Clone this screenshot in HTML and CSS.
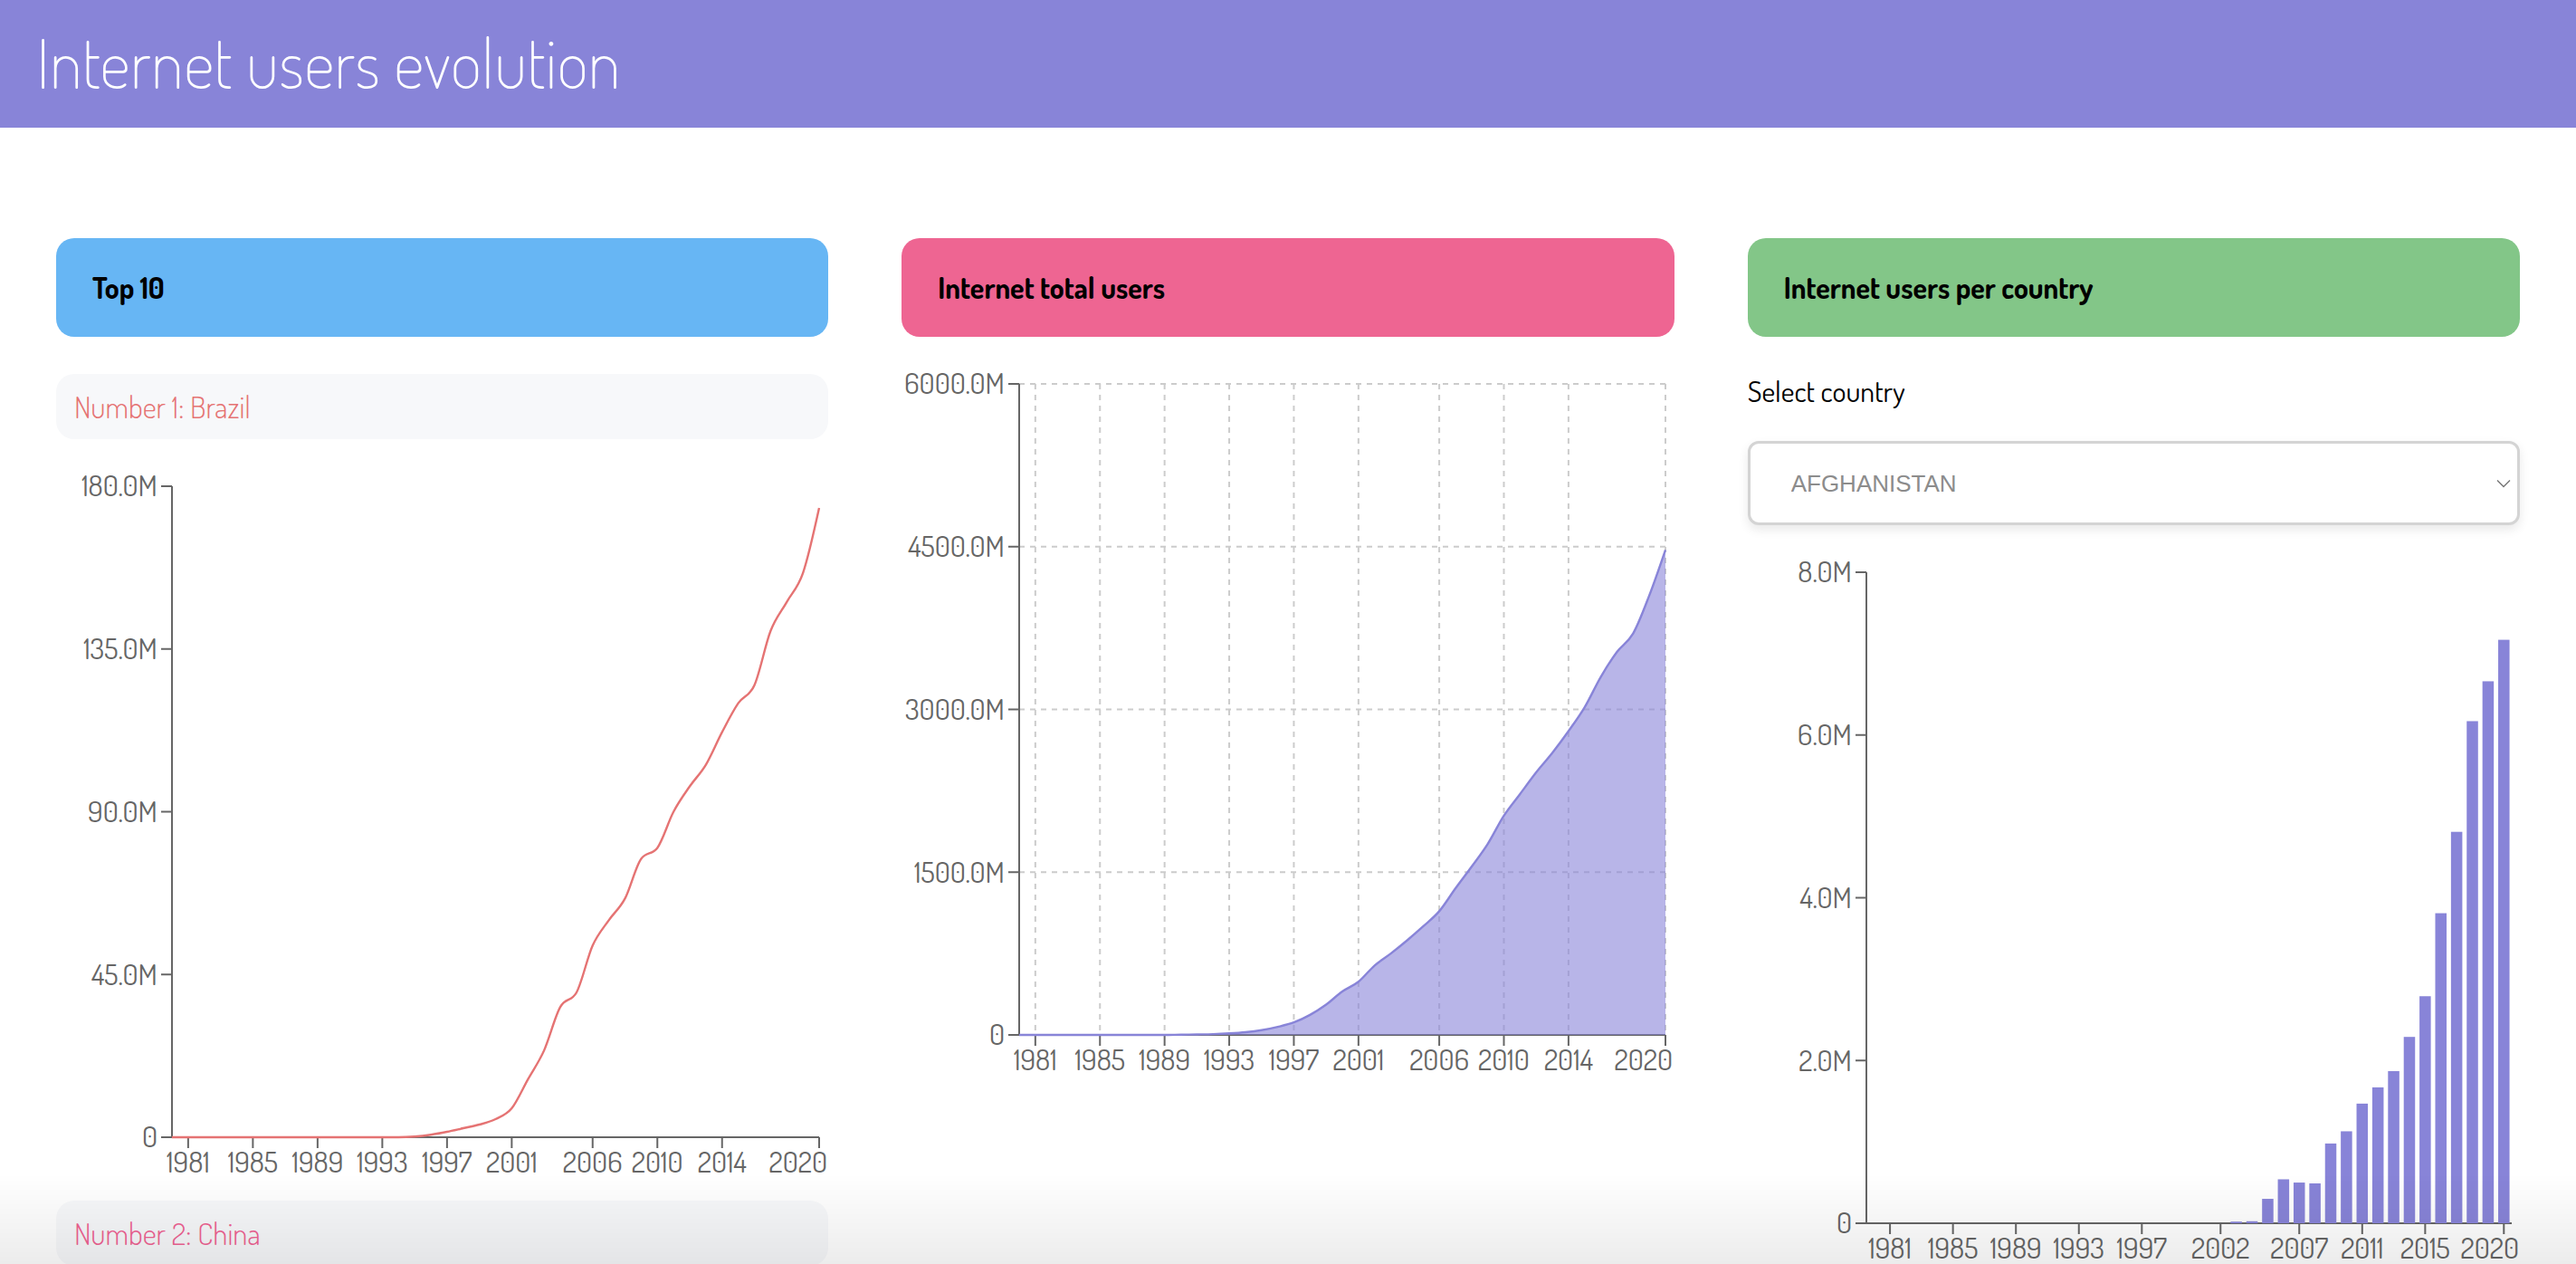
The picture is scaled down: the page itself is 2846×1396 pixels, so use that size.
FILE: index.html
```html
<!DOCTYPE html>
<html lang="en">
<head>
<meta charset="utf-8">
<title>Internet users evolution</title>
<link rel="stylesheet" href="styles.css">
</head>
<body>
<header class="app-bar">
  <h1 class="app-title">Internet users evolution</h1>
</header>

<main class="dashboard">
  <section class="column">
    <div class="card-head card-head--blue">Top 10</div>
    <div class="rank-item rank-item--red">Number 1: Brazil</div>
    <svg class="chart" id="chart-brazil" viewBox="0 0 853 785" preserveAspectRatio="xMinYMin meet"></svg>
    <div class="rank-item rank-item--pink">Number 2: China</div>
  </section>

  <section class="column">
    <div class="card-head card-head--pink">Internet total users</div>
    <svg class="chart" id="chart-total" viewBox="0 0 853 785" preserveAspectRatio="xMinYMin meet"></svg>
  </section>

  <section class="column">
    <div class="card-head card-head--green">Internet users per country</div>
    <label class="field-label" for="country">Select country</label>
    <div class="select-wrap">
      <select class="country-select" id="country">
        <option>AFGHANISTAN</option>
      </select>
      <svg class="select-chevron" viewBox="0 0 16 10" width="16" height="10"><path d="M1 1.5 L8 8.5 L15 1.5" fill="none" stroke="#777" stroke-width="1.4"/></svg>
    </div>
    <svg class="chart" id="chart-country" viewBox="0 0 853 785" preserveAspectRatio="xMinYMin meet"></svg>
  </section>
</main>

<div class="bottom-fade"></div>

<script src="charts.js"></script>
</body>
</html>
```
FILE: styles.css
```css
html {
  scrollbar-width: none;
}
html::-webkit-scrollbar {
  display: none;
}
body {
  margin: 0;
  background: #ffffff;
  font-family: "Dosis", "Roboto Condensed", "Liberation Sans", sans-serif;
  color: #000;
}

.app-bar {
  height: 141px;
  background: #8884d8;
  display: flex;
  align-items: center;
  padding-left: 40px;
  box-sizing: border-box;
}
.app-title {
  margin: 0;
  font-size: 75px;
  font-weight: 200;
  line-height: 1;
  color: #ffffff;
  padding-bottom: 4px;
}

.dashboard {
  display: grid;
  grid-template-columns: repeat(3, 1fr);
  column-gap: 81px;
  padding: 122px 62px 0;
}

.column {
  display: flex;
  flex-direction: column;
  min-width: 0;
}

.card-head {
  height: 109px;
  border-radius: 20px;
  display: flex;
  align-items: center;
  padding-left: 40px;
  font-size: 32px;
  font-weight: 700;
  color: #000;
}
.card-head--blue { background: #67b6f4; }
.card-head--pink { background: #ee6592; }
.card-head--green { background: #83c688; }

.rank-item {
  margin-top: 41px;
  height: 72px;
  border-radius: 20px;
  background: #f7f8fa;
  display: flex;
  align-items: center;
  padding-left: 20px;
  font-size: 33px;
  font-weight: 300;
}
.rank-item--red { color: #e57373; }
.rank-item--pink { color: #f06292; margin-top: 20px; }

.chart {
  display: block;
  width: 853px;
  height: 785px;
  margin-top: 36px;
  overflow: visible;
}

.field-label {
  margin-top: 36px;
  line-height: 48px;
  font-size: 32px;
  font-weight: 400;
  color: #000;
}

.select-wrap {
  position: relative;
  margin-top: 31px;
}
.country-select {
  appearance: none;
  -webkit-appearance: none;
  width: 100%;
  height: 93px;
  box-sizing: border-box;
  border: 3px solid #d4d4d4;
  border-radius: 12px;
  background: #ffffff;
  box-shadow: 0 5px 12px rgba(0, 0, 0, 0.09);
  padding-left: 45px;
  font-family: "Liberation Sans", Arial, sans-serif;
  font-size: 26px;
  color: #8c8c8c;
  outline: none;
}
.select-chevron {
  position: absolute;
  right: 10px;
  top: 42px;
  pointer-events: none;
}

.grid-line {
  stroke: #cccccc;
  stroke-width: 2;
  stroke-dasharray: 6 6;
}
.axis-line {
  stroke: #666666;
  stroke-width: 2;
}
.tick-label {
  font-family: "Dosis", "Roboto Condensed", sans-serif;
  font-size: 32px;
  fill: #666666;
}

.bottom-fade {
  position: fixed;
  left: 0;
  right: 0;
  bottom: 0;
  height: 100px;
  background: linear-gradient(to bottom, rgba(0, 0, 0, 0), rgba(0, 0, 0, 0.075));
  pointer-events: none;
}
```
FILE: charts.js
```js
(function () {
  var brazil = [0,0,0,0,0,0,0,0,0,0,0,0,0,0,0,
    0.2,0.7,1.5,2.5,3.5,5,8,16,24,36,40,53,60,66,77,80,90,97,103,112,120,125,140,148,156,174];
  var world = [0,0,0,0,0,0,0,0,0,0,
    2.6,4.4,7,14,25,44,74,115,185,280,400,490,640,750,870,1000,1140,1350,1550,1760,2020,2220,2420,2600,2800,3020,3300,3530,3700,4050,4470];
  var afg = [0,0,0,0,0,0,0,0,0,0,0,0,0,0,0,0,0,0,0,0,0,0,0,
    0.02,0.025,0.3,0.54,0.5,0.49,0.98,1.13,1.47,1.67,1.87,2.29,2.79,3.81,4.81,6.17,6.66,7.17];

  var T = 16, B = 735, N = 41, W = 853;

  function mono(p) {
    var n = p.length, s = [], t = [], i;
    for (i = 0; i < n - 1; i++) s.push((p[i + 1][1] - p[i][1]) / (p[i + 1][0] - p[i][0]));
    for (i = 1; i < n - 1; i++) {
      var s0 = s[i - 1], s1 = s[i];
      var h0 = p[i][0] - p[i - 1][0], h1 = p[i + 1][0] - p[i][0];
      var pp = (s0 * h1 + s1 * h0) / (h0 + h1);
      t[i] = (Math.sign(s0) + Math.sign(s1)) * Math.min(Math.abs(s0), Math.abs(s1), 0.5 * Math.abs(pp)) || 0;
    }
    t[0] = (3 * s[0] - t[1]) / 2;
    t[n - 1] = (3 * s[n - 2] - t[n - 2]) / 2;
    var d = 'M' + p[0][0].toFixed(2) + ',' + p[0][1].toFixed(2);
    for (i = 0; i < n - 1; i++) {
      var h = (p[i + 1][0] - p[i][0]) / 3;
      d += 'C' + (p[i][0] + h).toFixed(2) + ',' + (p[i][1] + h * t[i]).toFixed(2) + ' ' +
        (p[i + 1][0] - h).toFixed(2) + ',' + (p[i + 1][1] - h * t[i + 1]).toFixed(2) + ' ' +
        p[i + 1][0].toFixed(2) + ',' + p[i + 1][1].toFixed(2);
    }
    return d;
  }

  function build(id, cfg) {
    var svg = document.getElementById(id);
    if (!svg) return;
    var ax = cfg.ax, ae = cfg.ae, h = '', i;
    var yOf = function (v) { return B - (v / cfg.max) * (B - T); };
    var bw = (ae - ax) / N;
    var xOf = cfg.band
      ? function (k) { return ax + (k + 0.5) * bw; }
      : function (k) { return ax + k * (ae - ax) / (N - 1); };

    if (cfg.grid) {
      cfg.yt.forEach(function (v) {
        if (v > 0) h += '<line class="grid-line" x1="' + ax + '" x2="' + ae + '" y1="' + yOf(v) + '" y2="' + yOf(v) + '"/>';
      });
      cfg.xt.forEach(function (yr) {
        var x = xOf(yr - 1980);
        h += '<line class="grid-line" x1="' + x + '" x2="' + x + '" y1="' + T + '" y2="' + B + '"/>';
      });
    }

    h += '<line class="axis-line" x1="' + ax + '" y1="' + T + '" x2="' + ax + '" y2="' + B + '"/>';
    h += '<line class="axis-line" x1="' + ax + '" y1="' + B + '" x2="' + ae + '" y2="' + B + '"/>';
    cfg.yt.forEach(function (v, k) {
      var y = yOf(v);
      h += '<line class="axis-line" x1="' + (ax - 12) + '" x2="' + ax + '" y1="' + y + '" y2="' + y + '"/>';
      h += '<text class="tick-label" x="' + (ax - 16) + '" y="' + y + '" dy="0.355em" text-anchor="end">' + cfg.yl[k] + '</text>';
    });
    cfg.xt.forEach(function (yr, k) {
      var x = xOf(yr - 1980);
      var last = k === cfg.xt.length - 1;
      h += '<line class="axis-line" x1="' + x + '" x2="' + x + '" y1="' + B + '" y2="' + (B + 12) + '"/>';
      h += '<text class="tick-label" x="' + (last ? W - 1 : x) + '" y="' + (B + 16) + '" dy="0.71em" text-anchor="' + (last ? 'end' : 'middle') + '">' + yr + '</text>';
    });

    var pts = cfg.data.map(function (v, k) { return [xOf(k), yOf(v)]; });
    if (cfg.type === 'line') {
      h += '<path d="' + mono(pts) + '" fill="none" stroke="' + cfg.color + '" stroke-width="2.4"/>';
    } else if (cfg.type === 'area') {
      var d = mono(pts);
      h += '<path d="' + d + 'L' + ae + ',' + B + 'L' + ax + ',' + B + 'Z" fill="' + cfg.color + '" fill-opacity="0.6"/>';
      h += '<path d="' + d + '" fill="none" stroke="' + cfg.color + '" stroke-width="2.4"/>';
    } else if (cfg.type === 'bar') {
      var w = bw * 0.72;
      for (i = 0; i < N; i++) {
        var v = cfg.data[i];
        if (v <= 0) continue;
        var y = yOf(v);
        h += '<rect x="' + (xOf(i) - w / 2).toFixed(2) + '" y="' + y.toFixed(2) + '" width="' + w.toFixed(2) + '" height="' + (B - y).toFixed(2) + '" fill="' + cfg.color + '"/>';
      }
    }
    svg.innerHTML = h;
  }

  build('chart-brazil', {
    ax: 128, ae: 843, max: 180, grid: false, type: 'line', color: '#e57373', data: brazil,
    yt: [0, 45, 90, 135, 180], yl: ['0', '45.0M', '90.0M', '135.0M', '180.0M'],
    xt: [1981, 1985, 1989, 1993, 1997, 2001, 2006, 2010, 2014, 2020]
  });
  build('chart-total', {
    ax: 130, ae: 844, max: 6000, grid: true, type: 'area', color: '#8884d8', data: world,
    yt: [0, 1500, 3000, 4500, 6000], yl: ['0', '1500.0M', '3000.0M', '4500.0M', '6000.0M'],
    xt: [1981, 1985, 1989, 1993, 1997, 2001, 2006, 2010, 2014, 2020]
  });
  build('chart-country', {
    ax: 131, ae: 844, max: 8, grid: false, band: true, type: 'bar', color: '#8884d8', data: afg,
    yt: [0, 2, 4, 6, 8], yl: ['0', '2.0M', '4.0M', '6.0M', '8.0M'],
    xt: [1981, 1985, 1989, 1993, 1997, 2002, 2007, 2011, 2015, 2020]
  });
})();
```
